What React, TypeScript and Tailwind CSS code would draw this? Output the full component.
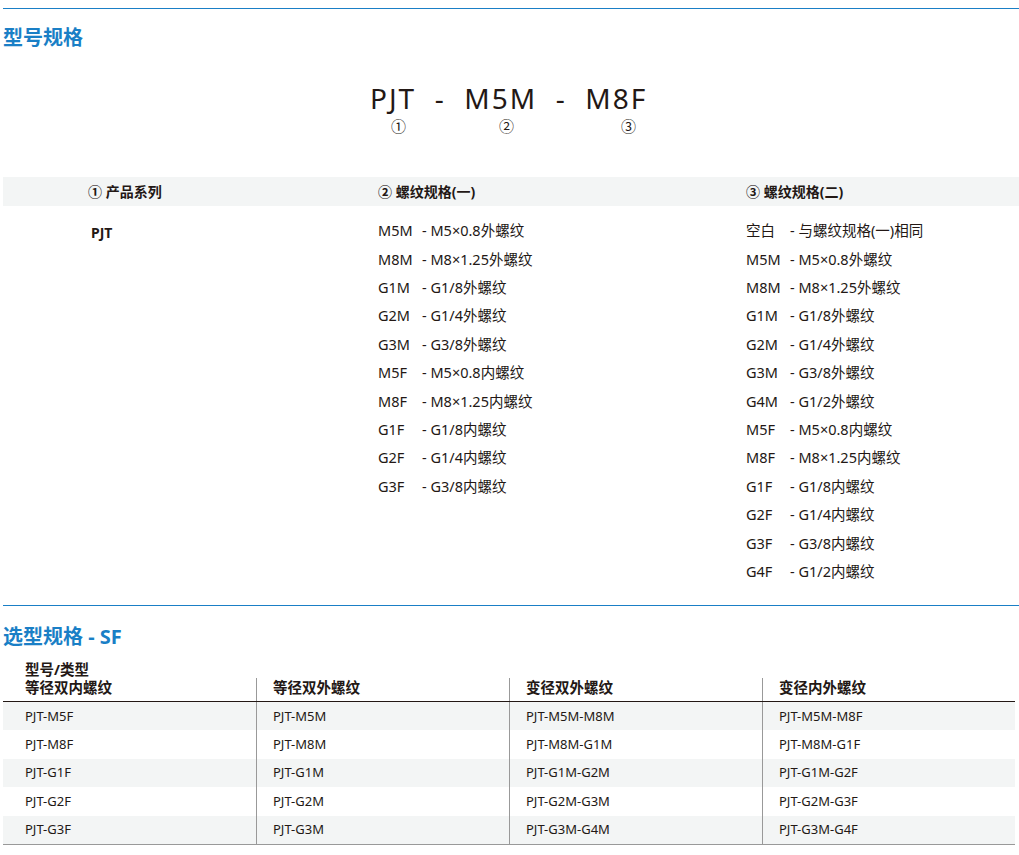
const font = { fontFamily: '"Noto Sans", "Noto Sans CJK SC", sans-serif' };

const col2 = [
  ["M5M", "M5×0.8外螺纹"],
  ["M8M", "M8×1.25外螺纹"],
  ["G1M", "G1/8外螺纹"],
  ["G2M", "G1/4外螺纹"],
  ["G3M", "G3/8外螺纹"],
  ["M5F", "M5×0.8内螺纹"],
  ["M8F", "M8×1.25内螺纹"],
  ["G1F", "G1/8内螺纹"],
  ["G2F", "G1/4内螺纹"],
  ["G3F", "G3/8内螺纹"],
];

const col3 = [
  ["空白", "与螺纹规格(一)相同"],
  ["M5M", "M5×0.8外螺纹"],
  ["M8M", "M8×1.25外螺纹"],
  ["G1M", "G1/8外螺纹"],
  ["G2M", "G1/4外螺纹"],
  ["G3M", "G3/8外螺纹"],
  ["G4M", "G1/2外螺纹"],
  ["M5F", "M5×0.8内螺纹"],
  ["M8F", "M8×1.25内螺纹"],
  ["G1F", "G1/8内螺纹"],
  ["G2F", "G1/4内螺纹"],
  ["G3F", "G3/8内螺纹"],
  ["G4F", "G1/2内螺纹"],
];

const rows = [
  ["PJT-M5F", "PJT-M5M", "PJT-M5M-M8M", "PJT-M5M-M8F"],
  ["PJT-M8F", "PJT-M8M", "PJT-M8M-G1M", "PJT-M8M-G1F"],
  ["PJT-G1F", "PJT-G1M", "PJT-G1M-G2M", "PJT-G1M-G2F"],
  ["PJT-G2F", "PJT-G2M", "PJT-G2M-G3M", "PJT-G2M-G3F"],
  ["PJT-G3F", "PJT-G3M", "PJT-G3M-G4M", "PJT-G3M-G4F"],
];

function SpecList({ items }: { items: string[][] }) {
  return (
    <div className="flex flex-col">
      {items.map(([code, desc]) => (
        <div key={code} className="flex h-[28.4px] items-center text-[14.5px] text-[#231815]">
          <span className="w-[44px]">{code}</span>
          <span>- {desc}</span>
        </div>
      ))}
    </div>
  );
}

export default function App() {
  return (
    <div className="w-[1019px] bg-white pt-2 text-[#231815]" style={font}>
      <div className="ml-[3px] h-px bg-[#1a7fc6]" />
      <h2 className="ml-[3px] mt-[17px] text-[20px] font-bold leading-6 text-[#1a7fc6]">型号规格</h2>

      <div className="ml-[370px] mt-[30px] flex flex-col">
        <div className="text-[28px] leading-9 tracking-[2px]">PJT&nbsp;&nbsp;-&nbsp;&nbsp;M5M&nbsp;&nbsp;-&nbsp;&nbsp;M8F</div>
        <div className="flex text-[15px] leading-5">
          <span className="ml-[21px] w-[14px]">①</span>
          <span className="ml-[94px] w-[14px]">②</span>
          <span className="ml-[108px] w-[14px]">③</span>
        </div>
      </div>

      <div className="ml-[3px] mt-[41px] flex h-[29px] items-center bg-[#f3f5f5] text-[14px] font-bold">
        <span className="w-[375px] pl-[85px]">① 产品系列</span>
        <span className="w-[368px]">② 螺纹规格(一)</span>
        <span>③ 螺纹规格(二)</span>
      </div>

      <div className="ml-[3px] mt-[11px] flex">
        <div className="w-[375px] pl-[88px] pt-[5px] text-[14px] font-bold">PJT</div>
        <div className="w-[368px]"><SpecList items={col2} /></div>
        <SpecList items={col3} />
      </div>

      <div className="ml-[3px] mt-[19px] h-px bg-[#1a7fc6]" />
      <h2 className="ml-[3px] mt-[19px] text-[20px] font-bold leading-6 text-[#1a7fc6]">选型规格 - SF</h2>

      <div className="ml-[3px] mr-[4px] mt-[11px]">
        <div className="grid grid-cols-4 border-b border-[#231815] text-[14.5px] font-bold leading-[18px]">
          <div className="pb-[5px] pl-[22px]">型号/类型<br />等径双内螺纹</div>
          <div className="mt-[18px] border-l border-[#999] pb-[5px] pl-[16px]">等径双外螺纹</div>
          <div className="mt-[18px] border-l border-[#999] pb-[5px] pl-[16px]">变径双外螺纹</div>
          <div className="mt-[18px] border-l border-[#999] pb-[5px] pl-[16px]">变径内外螺纹</div>
        </div>
        <div className="border-b border-[#999]">
          {rows.map((r, i) => (
            <div key={i} className={`grid h-[28.4px] grid-cols-4 text-[13px] ${i % 2 === 0 ? "bg-[#f3f5f5]" : ""}`}>
              {r.map((c, j) => (
                <div key={j} className={`flex items-center ${j === 0 ? "pl-[22px]" : "border-l border-[#999] pl-[16px]"}`}>
                  {c}
                </div>
              ))}
            </div>
          ))}
        </div>
      </div>
    </div>
  );
}
